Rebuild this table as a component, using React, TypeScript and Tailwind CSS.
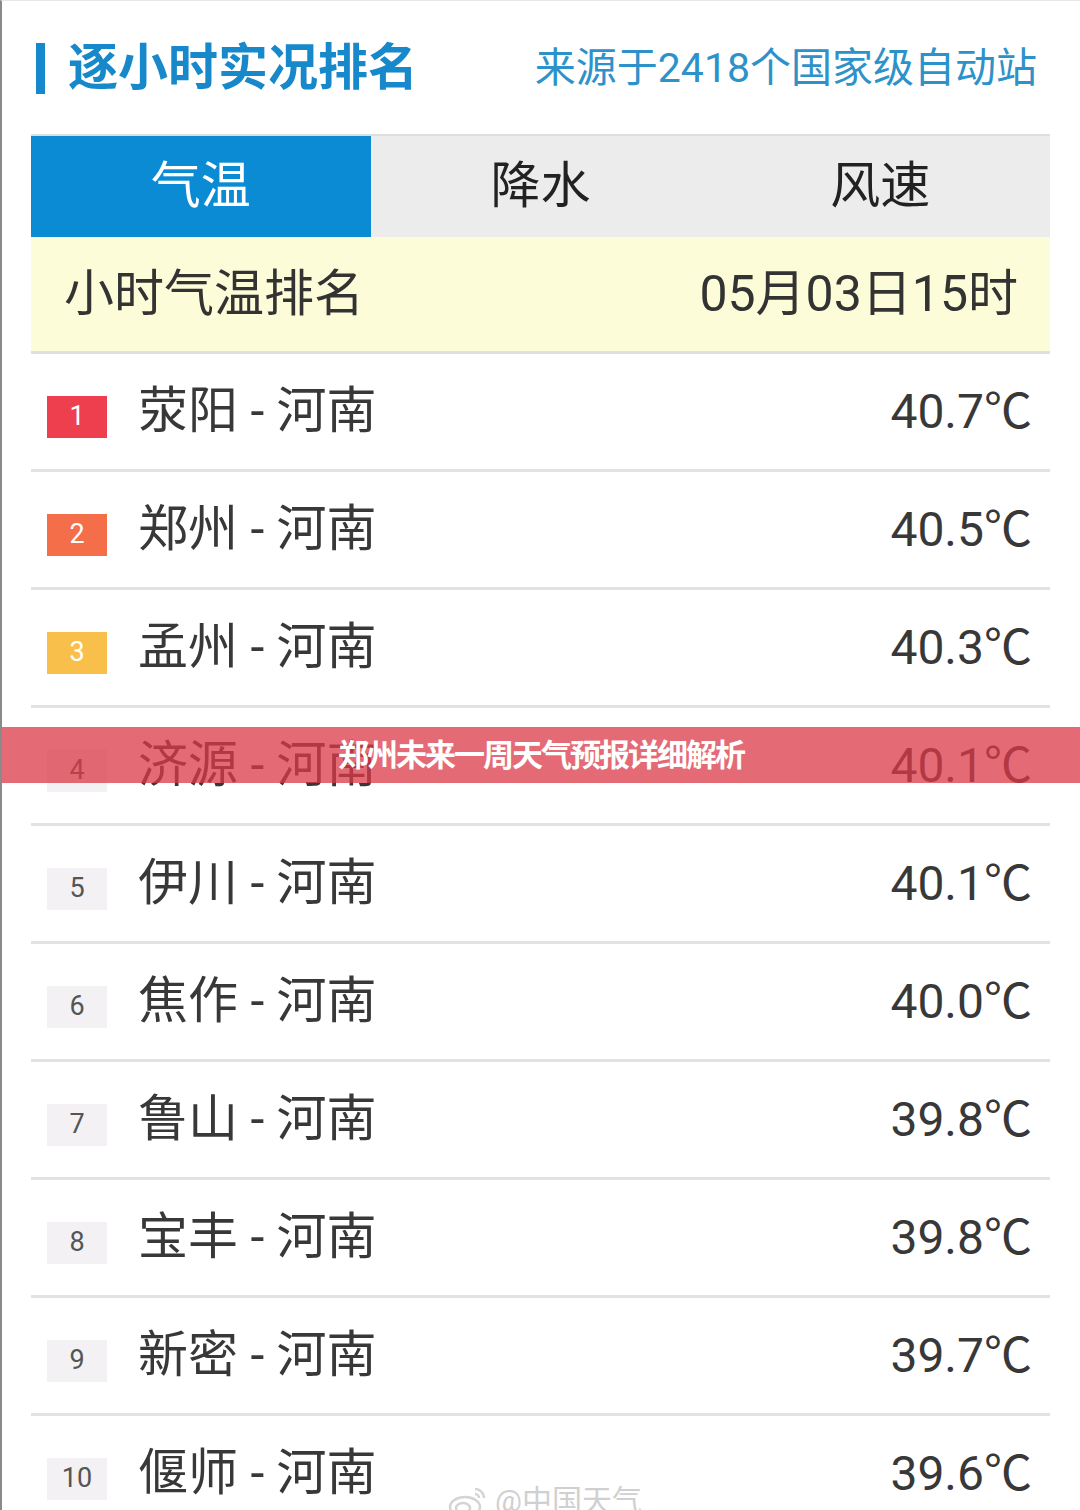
import React from 'react';

const FONT = { fontFamily: 'Roboto, "Noto Sans CJK SC", sans-serif' };

const rows = [
  { rank: 1, city: '荥阳', temp: '40.7℃' },
  { rank: 2, city: '郑州', temp: '40.5℃' },
  { rank: 3, city: '孟州', temp: '40.3℃' },
  { rank: 4, city: '济源', temp: '40.1℃' },
  { rank: 5, city: '伊川', temp: '40.1℃' },
  { rank: 6, city: '焦作', temp: '40.0℃' },
  { rank: 7, city: '鲁山', temp: '39.8℃' },
  { rank: 8, city: '宝丰', temp: '39.8℃' },
  { rank: 9, city: '新密', temp: '39.7℃' },
  { rank: 10, city: '偃师', temp: '39.6℃' },
];

const badgeClass = (rank: number) => {
  if (rank === 1) return 'bg-[#ee3f4e] text-white';
  if (rank === 2) return 'bg-[#f46e4a] text-white';
  if (rank === 3) return 'bg-[#f8bf4a] text-white';
  return 'bg-[#f3f1f3] text-[#555]';
};

const App: React.FC = () => {
  return (
    <div className="relative w-[1080px] h-[1510px] overflow-hidden bg-white border-l-2 border-t border-l-[#8a8a8a] border-t-[#e6e6e6]" style={FONT}>
      {/* Header */}
      <div className="flex items-center justify-between h-[133px] pl-[34px] pr-[43px]">
        <div className="flex items-center gap-[23px]">
          <div className="w-[9px] h-[51px] bg-[#1689cc] mt-[2px]" />
          <span className="text-[50px] font-bold text-[#1789cb] leading-none">逐小时实况排名</span>
        </div>
        <span className="text-[41px] text-[#2d92c9] leading-none mt-[2px]">来源于2418个国家级自动站</span>
      </div>

      <div className="ml-[29px] w-[1019px]">
        {/* Tabs */}
        <div className="grid grid-cols-3 h-[103px] border-t-2 border-[#dedede]">
          <div className="flex items-center justify-center bg-[#0b8bd3] text-white text-[50px]">气温</div>
          <div className="flex items-center justify-center bg-[#ececec] text-[#222] text-[50px]">降水</div>
          <div className="flex items-center justify-center bg-[#ececec] text-[#222] text-[50px]">风速</div>
        </div>

        {/* Sub header */}
        <div className="flex items-center justify-between h-[114px] bg-[#fdfcd9] pl-[33px] pr-[32px] text-[50px] text-[#333]">
          <span>小时气温排名</span>
          <span>05月03日15时</span>
        </div>
        <div className="h-[3px] bg-[#e0e0e0]" />

        {/* Rows */}
        {rows.map((r) => (
          <div key={r.rank}>
            <div className="flex items-center h-[115px] pl-[16px] pr-[18px]">
              <div className={`w-[60px] h-[42px] mt-[10px] flex items-center justify-center text-[27px] ${badgeClass(r.rank)}`}>
                {r.rank}
              </div>
              <span className="ml-[31px] text-[50px] text-[#383838]">{r.city} - 河南</span>
              <span className="ml-auto text-[48px] text-[#383838]">{r.temp}</span>
            </div>
            {r.rank < 10 && <div className="h-[3px] bg-[#e2e2e2]" />}
          </div>
        ))}
      </div>

      {/* Overlay banner */}
      <div className="absolute left-0 top-[726px] w-full h-[56px] bg-[#db3a48]/75 flex items-center justify-center">
        <span className="text-white text-[31px] font-bold tracking-[-2px] leading-none">郑州未来一周天气预报详细解析</span>
      </div>

      {/* Watermark */}
      <div className="absolute left-[445px] top-[1482px] flex items-center gap-[6px] text-[#d0d0d0]">
        <svg width="42" height="36" viewBox="0 0 42 36" fill="none" stroke="#d4d4d4" strokeWidth="2.5">
          <ellipse cx="18" cy="24" rx="15" ry="10" />
          <ellipse cx="16" cy="25" rx="7" ry="5" />
          <path d="M28 6a9 9 0 0 1 9 9" />
          <path d="M28 11a4 4 0 0 1 4 4" />
        </svg>
        <span className="text-[30px] leading-none">@中国天气</span>
      </div>
    </div>
  );
};

export default App;
